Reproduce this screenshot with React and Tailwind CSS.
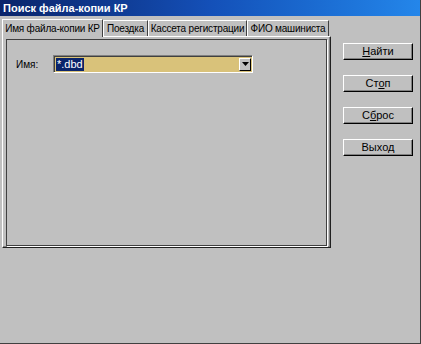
import React from 'react';

const font = { fontFamily: '"Liberation Sans", Arial, sans-serif' };

const tabs = [
    { label: 'Имя файла-копии КР', w: 'w-[101px]', active: true },
    { label: 'Поездка', w: 'w-[45px]' },
    { label: 'Кассета регистрации', w: 'w-[99px]' },
    { label: 'ФИО машиниста', w: 'w-[82px]' },
];

const Btn = ({ children }) => (
    <button className="w-[70px] h-[17px] bg-[#c0c0c0] border-t border-l border-white border-r border-b border-r-black border-b-black shadow-[inset_-1px_-1px_0_#808080] text-[11px] leading-none text-black flex items-center justify-center">
        {children}
    </button>
);

const App = () => {
    return (
        <div style={font} className="w-[421px] h-[344px] bg-[#c0c0c0] flex flex-col border-r border-b border-[#404040] overflow-hidden">
            {/* заголовок окна */}
            <div className="h-[16px] flex items-center px-[3px] bg-gradient-to-r from-[#0a246a] via-[#1450b8] to-[#2486ea]">
                <span className="text-white font-bold text-[11px] leading-none">Поиск файла-копии КР</span>
            </div>

            <div className="flex">
                {/* левая часть: вкладки */}
                <div className="ml-[2px] w-[329px] flex flex-col">
                    <div className="h-[20px] flex items-end">
                        {tabs.map((t) => (
                            <div
                                key={t.label}
                                className={
                                    t.active
                                        ? `${t.w} h-[18px] -mb-px relative z-10 bg-[#c0c0c0] border-t border-l border-white border-r border-r-[#404040] flex items-center justify-center whitespace-nowrap overflow-hidden text-[10px] tracking-[-0.2px] leading-none text-black`
                                        : `${t.w} h-[16px] bg-[#c0c0c0] border-t border-l border-white border-r border-r-[#404040] flex items-center justify-center whitespace-nowrap overflow-hidden text-[10px] tracking-[-0.2px] leading-none text-black`
                                }
                            >
                                {t.label}
                            </div>
                        ))}
                    </div>

                    <div className="h-[212px] border-t border-l border-white border-r border-b border-r-[#202020] border-b-[#202020] shadow-[inset_-1px_-1px_0_#808080] pt-[2px] pl-[3px] pr-[3px] pb-[2px]">
                        <div className="h-[207px] border border-[#404040] shadow-[1px_1px_0_#ffffff] pt-[15px] pl-[9px]">
                            <div className="flex items-center">
                                <span className="w-[37px] text-[10px] text-black">Имя:</span>
                                <div className="w-[200px] h-[18px] bg-[#d9c27a] border-t border-l border-[#808080] border-r border-b border-r-white border-b-white shadow-[inset_1px_1px_0_#404040] flex items-center pl-[2px] pr-[1px]">
                                    <span className="bg-[#0a246a] text-white text-[11px] leading-[13px] px-[1px]">*.dbd</span>
                                    <div className="ml-auto w-[12px] h-[13px] bg-[#c0c0c0] border-t border-l border-white border-r border-b border-r-black border-b-black flex items-center justify-center">
                                        <svg width="7" height="4" viewBox="0 0 7 4">
                                            <path d="M0 0h7L3.5 4z" fill="#000" />
                                        </svg>
                                    </div>
                                </div>
                            </div>
                        </div>
                    </div>
                </div>

                {/* правая часть: кнопки */}
                <div className="ml-[12px] pt-[27px] flex flex-col gap-[15px]">
                    <Btn><span><u>Н</u>айти</span></Btn>
                    <Btn><span>Ст<u>о</u>п</span></Btn>
                    <Btn><span>С<u>б</u>рос</span></Btn>
                    <Btn><span>Выход</span></Btn>
                </div>
            </div>
        </div>
    );
};

export default App;
